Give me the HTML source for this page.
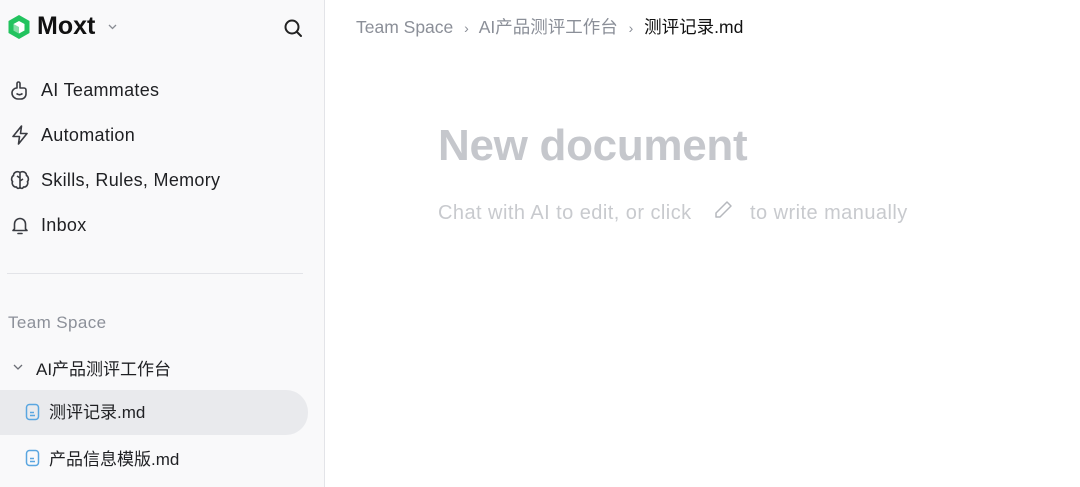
<!DOCTYPE html>
<html><head><meta charset="utf-8"><style>
*{margin:0;padding:0;box-sizing:border-box}
body{width:1080px;height:487px;overflow:hidden;background:#fff;font-family:"Liberation Sans","Noto Sans CJK SC",sans-serif;position:relative}
.sb{position:absolute;left:0;top:0;width:325px;height:487px;background:#f9f9fa;border-right:1px solid #e3e4e8}
.abs{position:absolute}
.nav{position:absolute;left:41px;font-size:18px;letter-spacing:.3px;color:#1f2023}
.cj{font-size:17px;letter-spacing:0}
.ic{position:absolute;left:9px}
svg{display:block}
</style></head><body>
<div class="sb">
 <svg class="abs" style="left:7px;top:14px" width="24" height="26" viewBox="0 0 24 26"><path d="M12 1L22.5 7v12L12 25 1.5 19V7z" fill="#22c35e"/><path d="M12 7l5.5 3v6.5L12 19.5 6.5 16.5V10z" fill="#fff"/><path d="M12 13v6.5L6.5 16.5V10z" fill="#22c35e" opacity=".55"/></svg>
 <div class="abs" style="left:37px;top:12px;font-size:25px;font-weight:700;color:#111">Moxt</div>
 <svg class="abs" style="left:107px;top:23px" width="11" height="8" viewBox="0 0 11 8"><path d="M2 2l3.5 3.5L9 2" stroke="#8a8d94" stroke-width="1.3" fill="none"/></svg>
 <svg class="abs" style="left:282px;top:17px" width="22" height="22" viewBox="0 0 22 22"><circle cx="10" cy="10" r="6.5" stroke="#222" stroke-width="2" fill="none"/><path d="M15 15l4 4" stroke="#222" stroke-width="2" stroke-linecap="round"/></svg>

 <svg class="ic" style="top:79px" width="22" height="22" viewBox="0 0 22 22" fill="none" stroke="#3a3c42" stroke-width="1.6" stroke-linejoin="round"><path d="M8 9V4.5a1.5 1.5 0 013 0V9h4a2 2 0 012 2v4a5 5 0 01-5 5H9a6 6 0 01-6-6 5 5 0 015-5z"/><path d="M7.5 14.5q3 2.5 6 0"/></svg>
 <div class="nav" style="top:80px">AI Teammates</div>
 <svg class="ic" style="top:124px" width="22" height="22" viewBox="0 0 22 22" fill="none" stroke="#3a3c42" stroke-width="1.6" stroke-linejoin="round"><path d="M12.5 2L4 12.5h6.5L9.5 20 18 9.5h-6.5z"/></svg>
 <div class="nav" style="top:125px">Automation</div>
 <svg class="ic" style="top:169px" width="22" height="22" viewBox="0 0 22 22" fill="none" stroke="#3a3c42" stroke-width="1.6"><path d="M11 3.5C8 1.5 4.5 3.5 4.5 6.5 2.5 7.5 2 11 3.5 12.5 2.5 15 4.5 18.5 7.5 18c1 2 2.5 1.5 3.5.5 1 1 2.5 1.5 3.5-.5 3 .5 5-3 4-5.5 1.5-1.5 1-5-1-6C17.5 3.5 14 1.5 11 3.5z"/><path d="M11 3.5v15M11 9l-3-2M11 12l3-2"/></svg>
 <div class="nav" style="top:170px">Skills, Rules, Memory</div>
 <svg class="ic" style="top:214px" width="22" height="22" viewBox="0 0 22 22" fill="none" stroke="#3a3c42" stroke-width="1.6" stroke-linejoin="round"><path d="M5.5 15V10a5.5 5.5 0 0111 0v5l1.5 1.5H4z"/><path d="M9 19.5h4" stroke-linecap="round"/></svg>
 <div class="nav" style="top:215px">Inbox</div>

 <div class="abs" style="left:7px;top:273px;width:296px;height:1px;background:#e3e4e8"></div>
 <div class="abs" style="left:8px;top:313px;font-size:17px;color:#8c9099;letter-spacing:.4px">Team Space</div>
 <svg class="abs" style="left:12px;top:362px" width="12" height="10" viewBox="0 0 12 10"><path d="M2 3l4 4 4-4" stroke="#6b6e75" stroke-width="1.3" fill="none"/></svg>
 <div class="nav cj" style="left:36px;top:355px">AI产品测评工作台</div>
 <div class="abs" style="left:0;top:390px;width:308px;height:45px;background:#e9eaed;border-radius:0 22px 22px 0"></div>
 <svg class="abs" style="left:25px;top:403px" width="15" height="18" viewBox="0 0 15 18" fill="none" stroke="#5aa6e0" stroke-width="1.5"><rect x="1.5" y="1.5" width="12" height="15" rx="3"/><path d="M5 9.5h4M5 12.5h5"/></svg>
 <div class="nav cj" style="left:49px;top:398px">测评记录.md</div>
 <svg class="abs" style="left:25px;top:449px" width="15" height="18" viewBox="0 0 15 18" fill="none" stroke="#5aa6e0" stroke-width="1.5"><rect x="1.5" y="1.5" width="12" height="15" rx="3"/><path d="M5 9.5h4M5 12.5h5"/></svg>
 <div class="nav cj" style="left:49px;top:445px">产品信息模版.md</div>
</div>

<div class="abs" style="left:356px;top:14px;font-size:17.5px;color:#8b8f98;white-space:nowrap">Team Space <span style="margin:0 6px;font-size:14px">›</span> AI产品测评工作台 <span style="margin:0 6px;font-size:14px">›</span> <span style="color:#111">测评记录.md</span></div>
<div class="abs" style="left:438px;top:121px;font-size:44px;font-weight:700;color:#c5c7cc;letter-spacing:-.3px">New document</div>
<div class="abs" style="left:438px;top:202px;font-size:20px;letter-spacing:.45px;color:#c8cace;white-space:nowrap">Chat with AI to edit, or click</div>
<svg class="abs" style="left:712px;top:199px" width="22" height="22" viewBox="0 0 22 22" fill="none" stroke="#b5b8bd" stroke-width="1.5" stroke-linejoin="round"><path d="M15 3l4 4L8 18H4v-4z"/></svg>
<div class="abs" style="left:750px;top:202px;font-size:20px;letter-spacing:.45px;color:#c8cace;white-space:nowrap">to write manually</div>
</body></html>
